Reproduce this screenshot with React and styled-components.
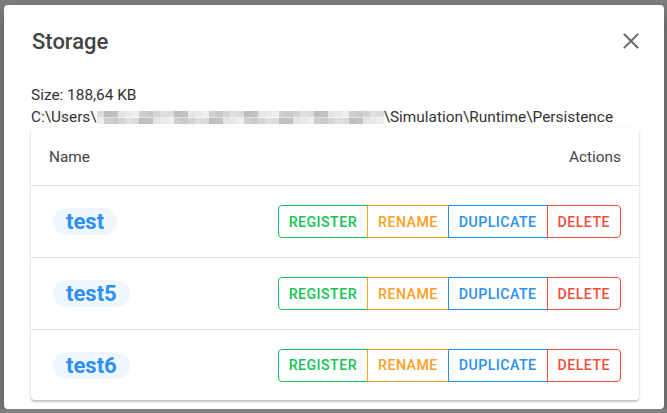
import React from "react";
import styled, { createGlobalStyle } from "styled-components";

const rows = ["test", "test5", "test6"];

const actions = [
  { label: "REGISTER", color: "#14c257" },
  { label: "RENAME", color: "#ff9f26" },
  { label: "DUPLICATE", color: "#2b8ff0" },
  { label: "DELETE", color: "#f24e3c" },
];

// pixelated redaction strip: alternating grey blocks
const greys = ["#d8d8d8", "#c4c4c4", "#e6e6e6", "#b8b8b8", "#cfcfcf", "#ededed", "#bcbcbc", "#dcdcdc", "#c9c9c9", "#e2e2e2"];
const strip = (offset) => {
  const stops = [];
  for (let i = 0; i < 41; i++) {
    const c = greys[(i * 3 + offset) % greys.length];
    stops.push(`${c} ${i * 7}px ${(i + 1) * 7}px`);
  }
  return `linear-gradient(90deg, ${stops.join(", ")})`;
};

const CloseIcon = () => (
  <svg width="16" height="16" viewBox="0 0 16 16">
    <path d="M1.5 1.5 L14.5 14.5 M14.5 1.5 L1.5 14.5" stroke="#666" strokeWidth="1.9" strokeLinecap="square" />
  </svg>
);

const App = () => {
  return (
    <>
      <Global />
      <Dialog>
        <TitleBar>
          <Title>Storage</Title>
          <CloseButton>
            <CloseIcon />
          </CloseButton>
        </TitleBar>
        <Content>
          <Info>Size: 188,64 KB</Info>
          <Info>
            C:\Users\
            <Redacted style={{ backgroundImage: `${strip(0)}, ${strip(5)}` }} />
            \Simulation\Runtime\Persistence
          </Info>
          <Card>
            <HeadRow>
              <HeadCell>Name</HeadCell>
              <HeadCell>Actions</HeadCell>
            </HeadRow>
            {rows.map((name, i) => (
              <Row key={name} last={i === rows.length - 1}>
                <Chip>{name}</Chip>
                <Group>
                  {actions.map((a) => (
                    <ActionButton key={a.label} color={a.color}>
                      {a.label}
                    </ActionButton>
                  ))}
                </Group>
              </Row>
            ))}
          </Card>
        </Content>
      </Dialog>
    </>
  );
};
export default App;

const Global = createGlobalStyle`
  body {
    margin: 0;
    background: #7f7f7f;
    font-family: Roboto, "Liberation Sans", sans-serif;
  }
`;

const Dialog = styled.div`
  margin: 5px 0 0 4px;
  width: 660px;
  height: 404px;
  background: #fff;
  border-radius: 4px;
  box-shadow: 0 8px 20px rgba(0, 0, 0, 0.35);
  display: flex;
  flex-direction: column;
  box-sizing: border-box;
`;

const TitleBar = styled.div`
  height: 72px;
  display: flex;
  align-items: center;
  justify-content: space-between;
  padding: 0 25px 0 28px;
`;

const Title = styled.h2`
  margin: 0;
  font-size: 22px;
  font-weight: 500;
  color: #444;
`;

const CloseButton = styled.div`
  width: 16px;
  height: 16px;
  display: flex;
`;

const Content = styled.div`
  padding: 7px 25px 0 27px;
  display: flex;
  flex-direction: column;
`;

const Info = styled.div`
  font-size: 15.4px;
  line-height: 22px;
  color: #333;
  white-space: nowrap;
  display: flex;
  align-items: center;
`;

const Redacted = styled.span`
  display: inline-block;
  width: 287px;
  height: 13px;
  margin-top: 1px;
  background-size: 100% 50%;
  background-position: left top, left bottom;
  background-repeat: no-repeat;
  opacity: 0.9;
`;

const Card = styled.div`
  border-radius: 4px;
  background: #fff;
  box-shadow: 0 2px 2px rgba(0, 0, 0, 0.2), 0 1px 4px rgba(0, 0, 0, 0.08);
`;

const HeadRow = styled.div`
  height: 57px;
  display: flex;
  align-items: center;
  justify-content: space-between;
  padding: 0 18px;
  border-bottom: 1px solid #e0e0e0;
`;

const HeadCell = styled.div`
  font-size: 15.4px;
  color: #444;
`;

const Row = styled.div`
  height: ${(p) => (p.last ? "70px" : "71px")};
  display: flex;
  align-items: center;
  justify-content: space-between;
  padding: 0 18px 0 22px;
  border-bottom: ${(p) => (p.last ? "none" : "1px solid #e0e0e0")};
`;

const Chip = styled.div`
  height: 27px;
  padding: 0 13px;
  border-radius: 14px;
  background: #eef6ff;
  color: #2e90f0;
  font-size: 22px;
  font-weight: 700;
  display: flex;
  align-items: center;
`;

const Group = styled.div`
  display: flex;
  & > div:first-child {
    border-radius: 4px 0 0 4px;
  }
  & > div:last-child {
    border-radius: 0 4px 4px 0;
  }
  & > div + div {
    margin-left: -1px;
  }
`;

const ActionButton = styled.div`
  height: 33px;
  padding: 0 10px;
  display: flex;
  align-items: center;
  border: 1px solid ${(p) => p.color};
  color: ${(p) => p.color};
  font-size: 14.2px;
  font-weight: 500;
  letter-spacing: 0.45px;
  box-sizing: border-box;
`;
